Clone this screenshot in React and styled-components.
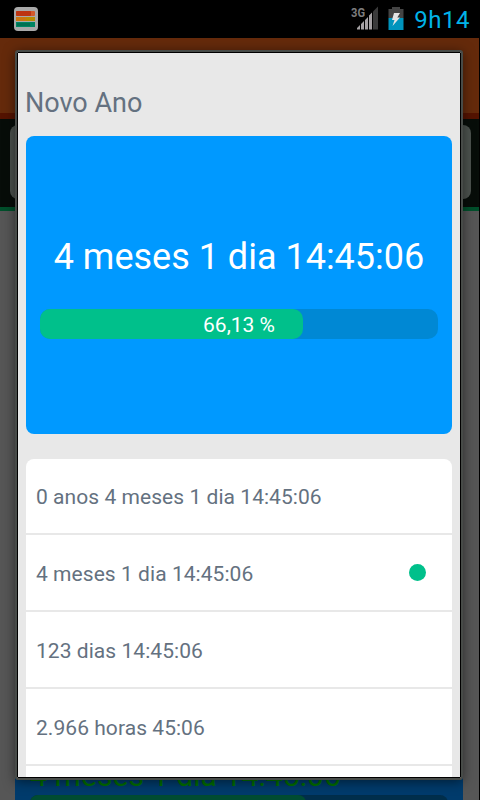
import React from 'react';
import styled, { createGlobalStyle } from 'styled-components';

const formats = [
  { id: 'years', label: '0 anos 4 meses 1 dia 14:45:06' },
  { id: 'months', label: '4 meses 1 dia 14:45:06' },
  { id: 'days', label: '123 dias 14:45:06' },
  { id: 'hours', label: '2.966 horas 45:06' },
  { id: 'minutes', label: '' }
];

const App = () => {
  const selectedFormat = 'months';
  const progress = 66.13;

  return (
    <Screen>
      <GlobalStyle />
      <StatusBar>
        <AppIcon />
        <StatusIcons>
          <SignalIcon />
          <BatteryIcon />
          <Clock>9h14</Clock>
        </StatusIcons>
      </StatusBar>

      <Backdrop>
        <ActionBar />
        <FilterBar>
          <FilterField />
        </FilterBar>
        <EventList>
          <DimmedEvent>
            <DimmedTime>4 meses 1 dia 14:45:06</DimmedTime>
            <DimmedTrack>
              <DimmedFill />
            </DimmedTrack>
          </DimmedEvent>
        </EventList>
      </Backdrop>

      <Dialog>
        <DialogTitle>Novo Ano</DialogTitle>
        <Countdown>
          <CountdownTime>4 meses 1 dia 14:45:06</CountdownTime>
          <ProgressTrack>
            <ProgressFill style={{ width: `${progress}%` }} />
            <ProgressLabel>66,13 %</ProgressLabel>
          </ProgressTrack>
        </Countdown>
        <FormatList>
          {formats.map(format => (
            <FormatItem key={format.id}>
              <span>{format.label}</span>
              {format.id === selectedFormat && <SelectedDot />}
            </FormatItem>
          ))}
        </FormatList>
      </Dialog>
    </Screen>
  );
};

const AppIcon = () => (
  <svg width="24" height="24" viewBox="0 0 24 24">
    <rect x="0" y="0" width="24" height="24" rx="4" fill="#a9a9a9" />
    <rect x="2" y="4" width="19" height="5" rx="1" fill="#d45a2c" />
    <rect x="2" y="4" width="15" height="5" rx="1" fill="#bd3412" />
    <rect x="2" y="10" width="19" height="4" fill="#b98a00" />
    <rect x="2" y="10" width="10" height="4" fill="#cc7510" />
    <rect x="2" y="15" width="19" height="5" fill="#008562" />
    <rect x="3" y="16" width="13" height="3" fill="#007052" />
  </svg>
);

const SignalIcon = () => (
  <svg width="28" height="26" viewBox="0 0 28 26">
    <text x="0" y="10.500" fontFamily="Roboto, sans-serif" fontSize="13" fontWeight="700" fill="#7d7d7d" textLength="14" lengthAdjust="spacingAndGlyphs">3G</text>
    <path d="M6 23.500V22L9 19V23.500Z M10 23.500V18L13 15V23.500Z M14 23.500V14L17 11V23.500Z M18 23.500V9.500L21 6.500V23.500Z" fill="#a6a2a4" />
    <path d="M22 23.500V5.500L27 0.500V23.500Z" fill="#3a3a3a" />
  </svg>
);

const BatteryIcon = () => (
  <svg width="16" height="24" viewBox="0 0 16 24">
    <path d="M4 0H12V2H15.500V11H0.500V2H4Z" fill="#444" />
    <rect x="0.500" y="11" width="15" height="12" fill="#0094bd" />
    <path d="M6 6H12L9.300 10.500H12L4.500 19L6.500 13H4Z" fill="#e4e4e4" />
  </svg>
);

const GlobalStyle = createGlobalStyle`
  * {
    box-sizing: border-box;
  }

  body {
    margin: 0;
    background: #000;
    font-family: Roboto, 'Noto Sans', sans-serif;
    overflow: hidden;
  }

  svg {
    display: block;
  }
`;

const Screen = styled.div`
  position: relative;
  display: flex;
  flex-direction: column;
  width: 480px;
  height: 800px;
  overflow: hidden;
  background: #000;
`;

const StatusBar = styled.header`
  display: flex;
  flex: none;
  align-items: center;
  justify-content: space-between;
  height: 38px;
  padding: 0 10px 0 14px;
`;

const StatusIcons = styled.div`
  display: flex;
  align-items: center;

  svg + svg {
    margin-left: 9px;
  }
`;

const Clock = styled.span`
  margin-left: 10px;
  padding-top: 1px;
  color: #00b3e8;
  font-size: 24px;
  letter-spacing: 0.5px;
`;

const Backdrop = styled.div`
  display: flex;
  flex: 1;
  flex-direction: column;
  width: 479px;
`;

const ActionBar = styled.div`
  flex: none;
  height: 81px;
  background: #652a0b;
  border-bottom: 6px solid #541300;
`;

const FilterBar = styled.div`
  flex: none;
  height: 92px;
  padding: 6px 8px 8px 10px;
  background: #070d09;
  border-bottom: 4px solid #004f2b;
`;

const FilterField = styled.div`
  height: 74px;
  border-radius: 8px;
  background: #4c524e;
`;

const EventList = styled.div`
  display: flex;
  flex: 1;
  flex-direction: column;
  justify-content: flex-end;
  padding: 0 16px 0 15px;
  background: #565656;
`;

const DimmedEvent = styled.div`
  height: 50px;
  padding: 10px 15px 0;
  background: #003b6c;
  overflow: hidden;
`;

const DimmedTime = styled.div`
  height: 35px;
  color: #007000;
  font-size: 30px;
  letter-spacing: 0.1px;
  line-height: 32px;
  white-space: nowrap;
`;

const DimmedTrack = styled.div`
  height: 25px;
  border-radius: 8px;
  background: #002e4b;
`;

const DimmedFill = styled.div`
  width: 66%;
  height: 100%;
  border-radius: 8px;
  background: #004c32;
`;

const Dialog = styled.section`
  position: absolute;
  top: 50px;
  left: 15px;
  width: 448px;
  height: 730px;
  padding: 0 8px;
  border: 2px solid #474b48;
  border-radius: 3px;
  outline: 1px solid #000;
  outline-offset: -3px;
  background: #e8e8e8;
  box-shadow: 0 2px 12px rgba(0, 0, 0, 0.5);
  overflow: hidden;
`;

const DialogTitle = styled.h1`
  height: 84px;
  margin: 0;
  padding-top: 35px;
  color: #647180;
  font-size: 27px;
  font-weight: 400;
  line-height: 32px;
`;

const Countdown = styled.div`
  display: flex;
  flex-direction: column;
  height: 298px;
  margin: 0 1px;
  padding: 99px 14px 0;
  border-radius: 8px;
  background: #0099ff;
  color: #fff;
`;

const CountdownTime = styled.div`
  height: 74px;
  font-size: 36px;
  line-height: 44px;
  text-align: center;
  white-space: nowrap;
`;

const ProgressTrack = styled.div`
  display: grid;
  grid-template-rows: 30px;
  height: 30px;
  border-radius: 10px;
  background: #0088d4;

  > * {
    grid-area: 1 / 1;
  }
`;

const ProgressFill = styled.div`
  border-radius: 10px;
  background: #00c08b;
`;

const ProgressLabel = styled.span`
  font-size: 21px;
  line-height: 32px;
  text-align: center;
`;

const FormatList = styled.ul`
  margin: 25px 1px 0;
  padding: 0;
  border-radius: 8px 8px 0 0;
  background: #fff;
  list-style: none;
`;

const FormatItem = styled.li`
  display: flex;
  align-items: center;
  justify-content: space-between;
  height: 77px;
  padding: 3px 26px 0 10px;
  border-bottom: 2px solid #e8e8e8;
  color: #647180;
  font-size: 21px;
  letter-spacing: 0.05px;

  &:first-child {
    height: 76px;
    padding-top: 1px;
  }
`;

const SelectedDot = styled.i`
  width: 17px;
  height: 17px;
  margin-top: -4px;
  border-radius: 50%;
  background: #00c08b;
`;

export default App;
